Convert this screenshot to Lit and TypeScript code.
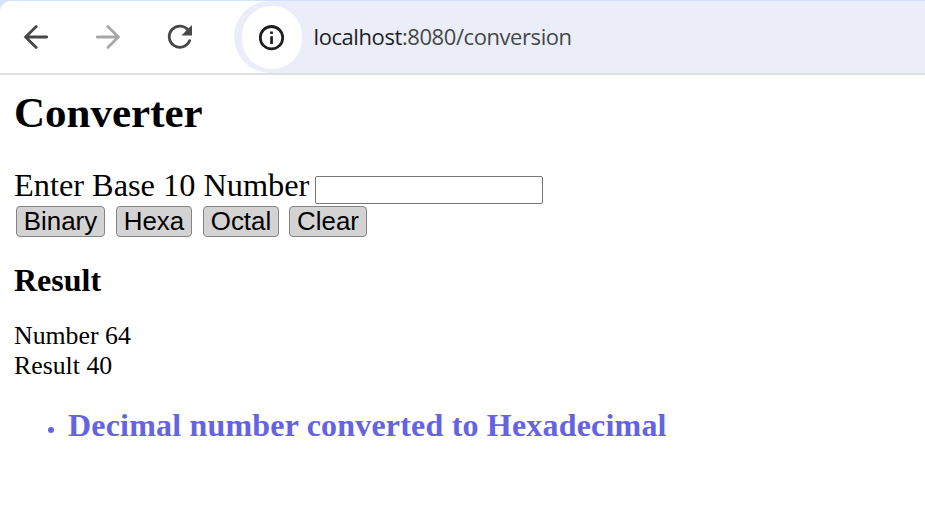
import { LitElement, html, css } from "lit";
import { customElement, state } from "lit/decorators.js";

@customElement("browser-bar")
class BrowserBar extends LitElement {
  static styles = css`
    :host { display: block; height: 75px; background: #d3e3fd; box-sizing: border-box; padding-top: 1px; }
    .bar { box-sizing: border-box; height: 74px; display: flex; background: #fff; border-bottom: 2px solid #dfe0e2; border-top-left-radius: 11px; }
    .nav { width: 234px; display: flex; flex: none; }
    .nav svg { display: block; flex: none; width: 72px; height: 72px; }
    .address { flex: 1; display: flex; align-items: center; background: #ebeef8; border-radius: 36px 0 0 36px; padding-left: 8px; }
    .info { flex: none; width: 60px; height: 63px; border-radius: 30px; background: #fff; }
    .url { margin: 0 0 2px 11.5px; font: 22px/30px "Open Sans", "Noto Sans", sans-serif; letter-spacing: -0.42px; color: #474747; white-space: nowrap; }
    .host { color: #1f1f1f; }
  `;
  render() {
    return html`<div class="bar">
      <div class="nav">
        <svg viewBox="0 0 72 72" fill="none" stroke="#474747" stroke-width="2.8" stroke-linecap="round"><path d="M46.7 36H26M36.2 25.4 25.6 36 36.2 46.6"/></svg>
        <svg viewBox="0 0 72 72" fill="none" stroke="#a8a8a8" stroke-width="2.8" stroke-linecap="round"><path d="M25.3 36H46M35.8 25.4 46.4 36 35.8 46.6"/></svg>
        <svg viewBox="0 0 72 72"><path d="M44.4 29.4A10.6 10.6 0 1 0 45.7 39.6" fill="none" stroke="#474747" stroke-width="2.8" stroke-linecap="round"/><path d="M48 24v10.6H37.4z" fill="#474747"/></svg>
      </div>
      <div class="address">
        <svg class="info" viewBox="0 0 60 63"><circle cx="29.5" cy="31.7" r="11.2" fill="none" stroke="#1f1f1f" stroke-width="2.8"/><path d="M28.2 30.3h2.7v7.6h-2.7zM28.2 25.4h2.7v2.7h-2.7z" fill="#1f1f1f"/></svg>
        <span class="url"><span class="host">localhost</span>:8080/conversion</span>
      </div>
    </div>`;
  }
}

@customElement("app-root")
class AppRoot extends LitElement {
  @state() number = 64;
  @state() result = "40";
  static styles = css`
    :host { display: block; height: 516px; overflow: hidden; background: #fff; color: #000; font-family: "Liberation Serif", serif; }
    main { padding: 13px 14px 0; white-space: nowrap; }
    h1 { margin: 0 0 28px; font-size: 43px; line-height: 50px; }
    .field { display: flex; height: 40px; font-size: 32.35px; line-height: 38px; }
    .label { width: 301px; flex: none; }
    input { box-sizing: border-box; width: 228px; height: 28px; margin: 10px 0 0; padding: 1px 2px; border: 1px solid #767676; border-radius: 2px; background: #fff; }
    .actions { display: flex; height: 31px; padding-left: 2px; }
    button { box-sizing: border-box; height: 31px; padding: 0; border: 1px solid #858585; border-radius: 4px; background: #d3d3d3; color: #000; font: 25.9px/29px "Liberation Sans", sans-serif; }
    .binary { width: 89px; margin-right: 11px; }
    .hexa { width: 76px; margin-right: 11px; }
    .octal { width: 76px; margin-right: 10px; }
    .clear { width: 78px; }
    h3 { margin: 25px 0 23px; font-size: 32px; line-height: 36px; }
    .row { font-size: 25.8px; line-height: 30px; }
    ul { list-style: none; margin: 26px 0 0; padding: 0 0 0 34px; }
    li { display: flex; align-items: center; color: #6464e2; font-size: 32px; line-height: 36px; font-weight: bold; letter-spacing: 0.19px; }
    .dot { width: 6px; height: 6px; border-radius: 50%; background: #6464e2; margin: 10px 14px 0 0; }
  `;
  render() {
    return html`<browser-bar></browser-bar>
      <main>
        <h1>Converter</h1>
        <div class="field"><label class="label" for="n">Enter Base 10 Number</label><input id="n" type="text"></div>
        <div class="actions">
          <button class="binary">Binary</button><button class="hexa">Hexa</button><button class="octal">Octal</button><button class="clear">Clear</button>
        </div>
        <h3>Result</h3>
        <div class="row">Number ${this.number}</div>
        <div class="row">Result ${this.result}</div>
        <ul><li><span class="dot"></span><span>Decimal number converted to Hexadecimal</span></li></ul>
      </main>`;
  }
}
